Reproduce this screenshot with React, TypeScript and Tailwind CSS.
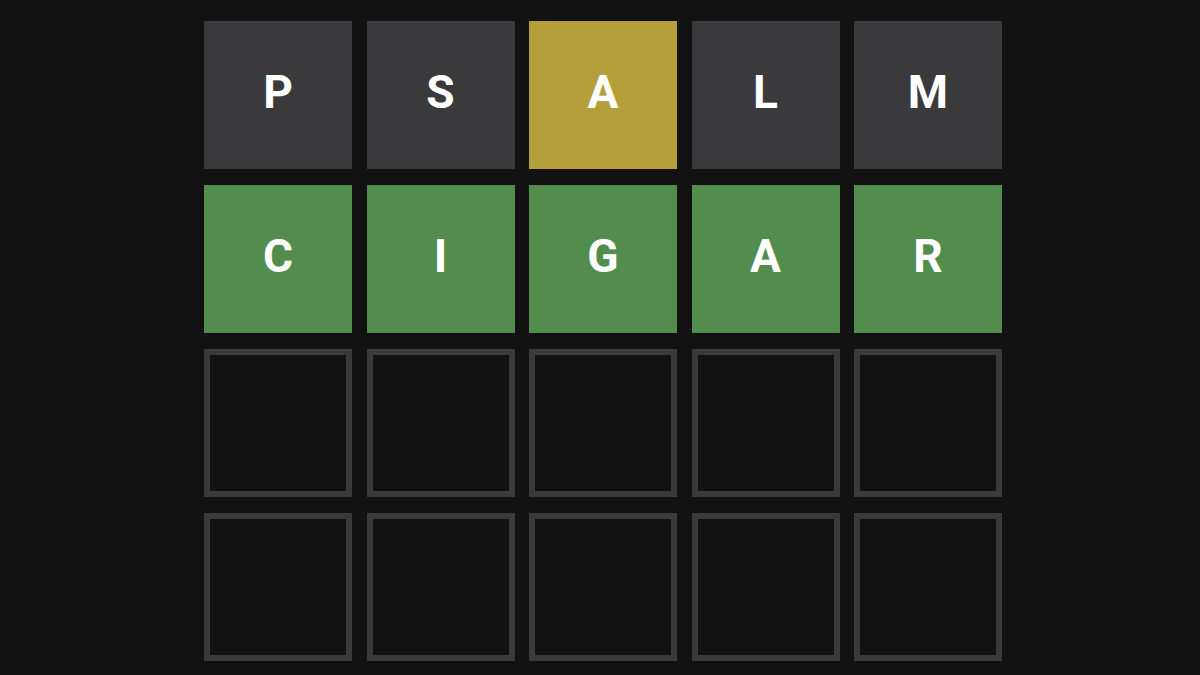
import React from "react";

type Tile = { l: string; s: "absent" | "present" | "correct" | "empty" };

const rows: Tile[][] = [
  [
    { l: "P", s: "absent" },
    { l: "S", s: "absent" },
    { l: "A", s: "present" },
    { l: "L", s: "absent" },
    { l: "M", s: "absent" },
  ],
  [
    { l: "C", s: "correct" },
    { l: "I", s: "correct" },
    { l: "G", s: "correct" },
    { l: "A", s: "correct" },
    { l: "R", s: "correct" },
  ],
  Array.from({ length: 5 }, () => ({ l: "", s: "empty" as const })),
  Array.from({ length: 5 }, () => ({ l: "", s: "empty" as const })),
];

function cls(s: Tile["s"]) {
  switch (s) {
    case "absent":
      return "bg-[#3a3a3c]";
    case "present":
      return "bg-[#b59f3b]";
    case "correct":
      return "bg-[#538d4e]";
    default:
      return "border-[6px] border-[#3a3a3c] bg-[#121213]";
  }
}

export default function App() {
  return (
    <div className="w-[1200px] h-[675px] bg-[#121213] overflow-hidden flex justify-center pt-[21px] pl-[6px]">
      <div className="grid grid-cols-[repeat(5,148px)] auto-rows-[148px] gap-x-[14.5px] gap-y-[16px] h-max">
        {rows.flat().map((t, i) => (
          <div
            key={i}
            className={`${cls(t.s)} flex items-center justify-center text-white font-bold text-[46px] leading-none pb-[6px]`}
            style={{ fontFamily: 'Roboto, "Liberation Sans", Arial, sans-serif' }}
          >
            {t.l}
          </div>
        ))}
      </div>
    </div>
  );
}
